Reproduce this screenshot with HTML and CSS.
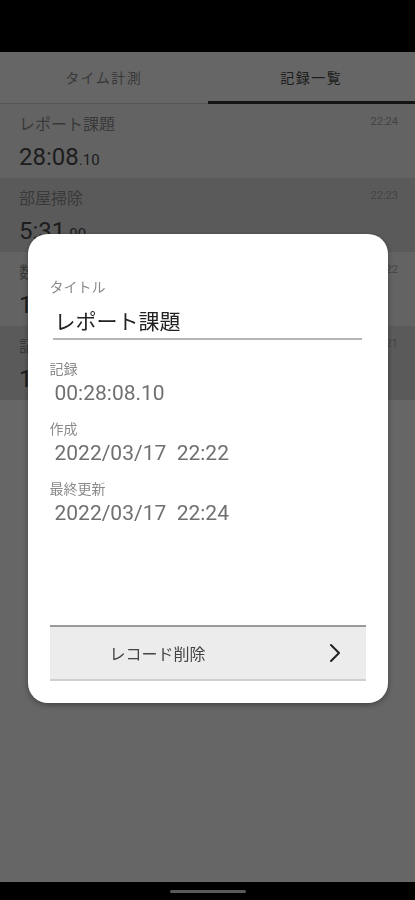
FILE: index.html
```html
<!DOCTYPE html>
<html lang="ja">
<head>
  <meta charset="UTF-8" />
  <title>記録一覧</title>
  <link rel="stylesheet" href="styles.css">
</head>
<body>
  <div class="status-bar"></div>

  <!-- Tabs -->
  <nav class="tabs">
    <div class="tab">タイム計測</div>
    <div class="tab active">記録一覧</div>
  </nav>

  <!-- Record list -->
  <ul class="records">
    <li class="record">
      <div class="record-top">
        <span class="record-title">レポート課題</span>
        <span class="record-clock">22:24</span>
      </div>
      <div class="record-time">28:08<small>.10</small></div>
    </li>
    <li class="record">
      <div class="record-top">
        <span class="record-title">部屋掃除</span>
        <span class="record-clock">22:23</span>
      </div>
      <div class="record-time">5:31<small>.00</small></div>
    </li>
    <li class="record">
      <div class="record-top">
        <span class="record-title">数学の宿題</span>
        <span class="record-clock">22:22</span>
      </div>
      <div class="record-time">12:45<small>.30</small></div>
    </li>
    <li class="record">
      <div class="record-top">
        <span class="record-title">記事作成</span>
        <span class="record-clock">22:21</span>
      </div>
      <div class="record-time">10:02<small>.55</small></div>
    </li>
  </ul>

  <div class="nav-bar"><span class="nav-pill"></span></div>

  <!-- Detail dialog -->
  <div class="overlay">
    <div class="dialog" role="dialog" aria-label="記録の詳細">
      <label class="field-label" for="title">タイトル</label>
      <input class="title-input" id="title" type="text" value="レポート課題" />

      <div class="field">
        <div class="field-label">記録</div>
        <div class="field-value">00:28:08.10</div>
      </div>
      <div class="field">
        <div class="field-label">作成</div>
        <div class="field-value">2022/03/17&nbsp;&nbsp;22:22</div>
      </div>
      <div class="field">
        <div class="field-label">最終更新</div>
        <div class="field-value">2022/03/17&nbsp;&nbsp;22:24</div>
      </div>

      <button class="delete-btn" type="button">
        <span>レコード削除</span>
        <svg width="14" height="20" viewBox="0 0 14 20" aria-hidden="true">
          <path d="M3 2 L11 10 L3 18" fill="none" stroke="#222" stroke-width="2" stroke-linecap="round" stroke-linejoin="round" />
        </svg>
      </button>
    </div>
  </div>
</body>
</html>
```

FILE: styles.css
```css
body {
  margin: 0;
  width: 415px;
  height: 900px;
  background: #fff;
  font-family: Roboto, "Noto Sans CJK JP", sans-serif;
  display: flex;
  flex-direction: column;
  overflow: hidden;
}
.status-bar {
  height: 52px;
  background: #000;
  flex-shrink: 0;
}
.tabs {
  display: flex;
  height: 51px;
  border-bottom: 1px solid #d8d8d8;
  flex-shrink: 0;
}
.tab {
  flex: 1;
  display: flex;
  align-items: center;
  justify-content: center;
  font-size: 14px;
  color: #8e8e8e;
  letter-spacing: 1.5px;
  border-bottom: 3px solid transparent;
  margin-bottom: -1px;
}
.tab.active {
  color: #4a4a4a;
  border-bottom-color: #333;
}
.records {
  list-style: none;
  margin: 0;
  padding: 0;
  flex: 1;
}
.record {
  height: 74px;
  box-sizing: border-box;
  padding: 10px 17px 0 19px;
}
.record:nth-child(even) {
  background: #e2e2e2;
}
.record:nth-child(odd) {
  background: #f8f8f8;
}
.record-top {
  display: flex;
  justify-content: space-between;
  align-items: flex-start;
}
.record-title {
  font-size: 16px;
  color: #909090;
  line-height: 22px;
}
.record-clock {
  font-size: 11px;
  color: #a8a8a8;
  line-height: 16px;
}
.record-time {
  margin-top: 7px;
  font-size: 24px;
  color: #4a4a4a;
  line-height: 28px;
}
.record-time small {
  font-size: 15px;
}
.nav-bar {
  height: 18px;
  background: #000;
  display: flex;
  justify-content: center;
  align-items: center;
  flex-shrink: 0;
}
.nav-pill {
  width: 76px;
  height: 3px;
  border-radius: 2px;
  background: #ddd;
}
.overlay {
  position: fixed;
  inset: 0;
  background: rgba(0, 0, 0, 0.6);
  display: flex;
  align-items: center;
  justify-content: center;
  padding: 54px 0 18px;
  box-sizing: border-box;
}
.dialog {
  width: 360px;
  height: 469px;
  box-sizing: border-box;
  background: #fff;
  border-radius: 20px;
  padding: 44px 22px 22px;
  display: flex;
  flex-direction: column;
  box-shadow: 0 2px 6px rgba(0, 0, 0, 0.35);
}
.field-label {
  display: block;
  font-size: 14px;
  color: #8a8a8a;
  line-height: 18px;
}
.title-input {
  margin: 12px 4px 0 3px;
  padding: 0 0 2px 2px;
  border: none;
  border-bottom: 2px solid #b5b5b5;
  font-family: Roboto, "Noto Sans CJK JP", sans-serif;
  font-size: 21px;
  line-height: 28px;
  height: 28px;
  color: #222;
  outline: none;
}
.field {
  margin-top: 20px;
}
.field + .field {
  margin-top: 15px;
}
.field-value {
  margin-top: 3px;
  padding-left: 5px;
  font-size: 21px;
  line-height: 24px;
  color: #707070;
}
.delete-btn {
  margin-top: auto;
  height: 56px;
  display: flex;
  align-items: center;
  justify-content: space-between;
  padding: 0 24px 0 60px;
  background: #ececec;
  border: none;
  border-top: 2px solid #9a9a9a;
  border-bottom: 2px solid #cfcfcf;
  font-family: Roboto, "Noto Sans CJK JP", sans-serif;
  font-size: 16px;
  color: #444;
  cursor: pointer;
}
```
